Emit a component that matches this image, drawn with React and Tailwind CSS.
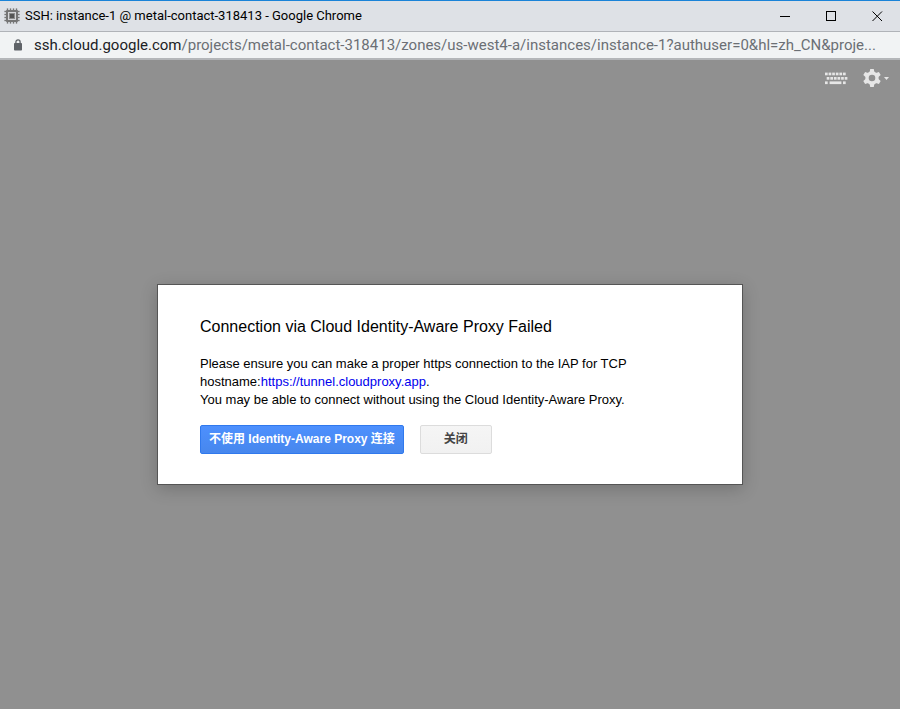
import React from "react";

const uiFont = "font-['Roboto','Open_Sans',sans-serif]";
const bodyFont = "font-['Liberation_Sans','Noto_Sans_CJK_SC',sans-serif]";

function ChipIcon() {
  const pins = [3, 6, 9, 12];
  return (
    <svg className="size-4 shrink-0" viewBox="0 0 16 16" aria-hidden="true">
      {pins.map((p) => (
        <g key={p} fill="#757575">
          <rect x={p - 0.2} y="0.4" width="1.400" height="15.200" />
          <rect x="0.400" y={p - 0.2} width="15.200" height="1.400" />
        </g>
      ))}
      <rect x="2" y="2" width="12" height="12" rx="1" fill="#757575" />
      <rect x="4" y="4" width="8" height="8" fill="#d4d5d8" />
      <rect x="5" y="5" width="6" height="6" fill="#8c8c8c" />
      <rect x="6" y="6" width="4" height="4" fill="#555" />
    </svg>
  );
}

function LockIcon() {
  return (
    <svg className="h-3 w-2 shrink-0" viewBox="0 0 8 12" aria-hidden="true">
      <path d="M1.900 5V3a2.100 2.100 0 0 1 4.200 0v2" fill="none" stroke="#5f6368" strokeWidth="1.300" />
      <rect x="0" y="4" width="8" height="7.500" rx="0.800" fill="#5f6368" />
    </svg>
  );
}

function KeyboardIcon() {
  const cols = [0, 3.6, 7.2, 10.8, 14.4, 18];
  return (
    <svg className="h-[13px] w-6" viewBox="0 0 24 13" fill="#e6e6e6" aria-hidden="true">
      {cols.map((x) => (
        <g key={x}>
          <rect x={x} y="0.6" width="2.700" height="2.700" />
          <rect x={x + 1.7} y="5" width="2.700" height="2.700" />
        </g>
      ))}
      <rect x="0" y="9.400" width="2.700" height="2.700" />
      <rect x="4.600" y="9.400" width="11.800" height="2.700" />
      <rect x="18" y="9.400" width="2.700" height="2.700" />
    </svg>
  );
}

function GearIcon() {
  return (
    <svg className="size-[18px]" viewBox="0 0 18 18" aria-hidden="true">
      <g fill="#e6e6e6">
        {[0, 60, 120].map((a) => (
          <path
            key={a}
            d="M7.200 0h3.600l.7 4h-5zM7.200 18h3.600l.7-4h-5z"
            transform={`rotate(${a} 9 9)`}
          />
        ))}
      </g>
      <circle cx="9" cy="9" r="5" fill="none" stroke="#e6e6e6" strokeWidth="3.400" />
    </svg>
  );
}

function TitleBar() {
  return (
    <header className="flex h-8 items-center border-t border-b border-t-[#1a83d8] border-b-[#b0b3b8] bg-[#dee1e6] pl-1">
      <ChipIcon />
      <h1 className={`ml-[5px] flex-1 truncate text-[13px] leading-5 text-black ${uiFont}`}>
        SSH: instance-1 @ metal-contact-318413 - Google Chrome
      </h1>
      <div className="flex h-full">
        <button type="button" aria-label="Minimize" className="flex w-[46px] items-center justify-center">
          <svg className="h-[11px] w-[11px]" viewBox="0 0 11 11" stroke="#000" shapeRendering="crispEdges">
            <path d="M0 5.5h10" />
          </svg>
        </button>
        <button type="button" aria-label="Maximize" className="flex w-[46px] items-center justify-center">
          <svg className="h-[11px] w-[11px]" viewBox="0 0 11 11" stroke="#000" fill="none" shapeRendering="crispEdges">
            <rect x="0.5" y="0.5" width="9" height="9" />
          </svg>
        </button>
        <button type="button" aria-label="Close" className="flex w-[46px] items-center justify-center">
          <svg className="h-[11px] w-[11px]" viewBox="0 0 11 11" stroke="#000" strokeWidth="1">
            <path d="M0.500 0.500l9.500 9.500M10 0.500l-9.500 9.500" />
          </svg>
        </button>
      </div>
    </header>
  );
}

function AddressBar() {
  return (
    <div className="flex h-7 items-center border-b-2 border-b-[#b4b6b9] bg-[#f1f3f4] pr-3 pl-[14px]">
      <LockIcon />
      <p className={`ml-3 min-w-0 flex-1 truncate text-[15px] leading-6 text-[#6b6f74] ${uiFont}`}>
        <span className="text-[#202124]">ssh.cloud.google.com</span>
        /projects/metal-contact-318413/zones/us-west4-a/instances/instance-1?authuser=0&amp;hl=zh_CN&amp;proje...
      </p>
    </div>
  );
}

function Toolbar() {
  return (
    <div className="absolute top-[9px] right-[11px] flex items-center gap-[14px]">
      <button type="button" aria-label="Keyboard">
        <KeyboardIcon />
      </button>
      <button type="button" aria-label="Settings" className="flex items-center gap-[3px]">
        <GearIcon />
        <svg className="h-[3px] w-[5px]" viewBox="0 0 5 3" fill="#e6e6e6" aria-hidden="true">
          <path d="M0 0h5L2.500 3z" />
        </svg>
      </button>
    </div>
  );
}

function ConnectionDialog() {
  return (
    <section
      role="dialog"
      aria-labelledby="dialog-title"
      className={`w-full max-w-[586px] border border-[#555] bg-white px-[42px] py-[30px] text-black shadow-[0_4px_16px_rgba(0,0,0,0.2)] ${bodyFont}`}
    >
      <h2 id="dialog-title" className="text-[16px] leading-6">
        Connection via Cloud Identity-Aware Proxy Failed
      </h2>
      <p className="mt-4 text-[13px] leading-[18px]">
        Please ensure you can make a proper https connection to the IAP for TCP hostname:
        <a href="https://tunnel.cloudproxy.app" className="text-[#0000ee]">https://tunnel.cloudproxy.app</a>.
        <br />
        You may be able to connect without using the Cloud Identity-Aware Proxy.
      </p>
      <div className="mt-4 flex gap-4 text-[12px] leading-[27px] font-bold">
        <button
          type="button"
          className="rounded-[2px] border border-[#3079ed] bg-linear-to-b from-[#4d90fe] to-[#4787ed] px-2 whitespace-nowrap text-white"
        >
          不使用 Identity-Aware Proxy 连接
        </button>
        <button
          type="button"
          className="min-w-[72px] rounded-[2px] border border-[#dcdcdc] bg-linear-to-b from-[#f5f5f5] to-[#f1f1f1] px-2 text-[#444]"
        >
          关闭
        </button>
      </div>
    </section>
  );
}

export default function App() {
  return (
    <div className="flex min-h-screen flex-col bg-[#909090]">
      <TitleBar />
      <AddressBar />
      <main className="relative flex flex-1 items-center justify-center">
        <Toolbar />
        <ConnectionDialog />
      </main>
    </div>
  );
}
